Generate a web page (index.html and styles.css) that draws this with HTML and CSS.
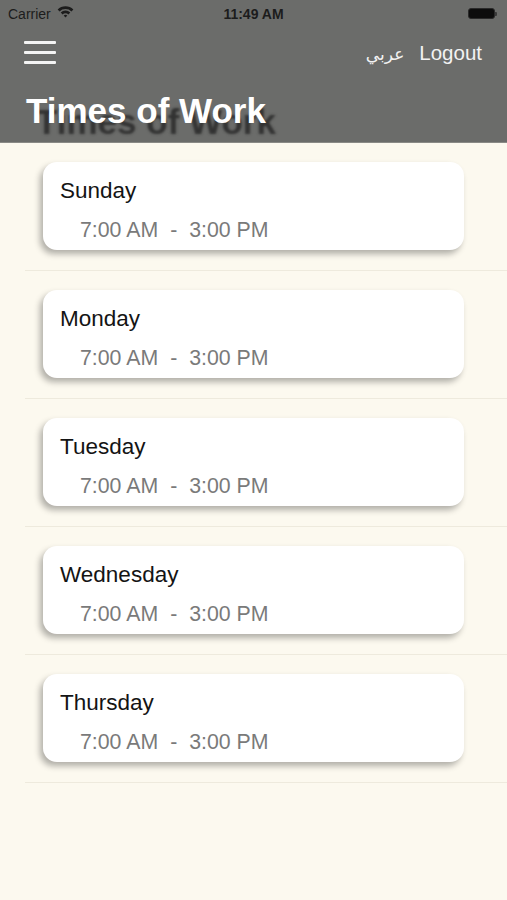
FILE: index.html
```html
<!DOCTYPE html>
<html lang="en">
<head>
<meta charset="utf-8">
<title>Times of Work</title>
<link rel="stylesheet" href="styles.css">
</head>
<body>
<header class="header">
  <div class="status">
    <div class="status-left">
      <span>Carrier</span>
      <svg class="wifi" width="17" height="13" viewBox="0 0 16 12" aria-hidden="true">
        <path d="M0.6 4.2 A10.5 10.5 0 0 1 15.4 4.2 L13.6 6 A7.9 7.9 0 0 0 2.4 6 Z" fill="#1c1c1c"/>
        <path d="M3.5 7 A6.3 6.3 0 0 1 12.5 7 L10.7 8.8 A3.8 3.8 0 0 0 5.3 8.8 Z" fill="#1c1c1c"/>
        <path d="M6.3 9.8 A2.4 2.4 0 0 1 9.7 9.8 L8 11.6 Z" fill="#1c1c1c"/>
      </svg>
    </div>
    <div class="status-time">11:49 AM</div>
    <div class="status-right">
      <span class="battery"><span class="battery-fill"></span></span><span class="battery-nub"></span>
    </div>
  </div>
  <nav class="nav">
    <button class="menu" aria-label="Menu"><span></span><span></span><span></span></button>
    <div class="nav-actions">
      <span class="lang" lang="ar">عربي</span>
      <span class="logout">Logout</span>
    </div>
  </nav>
  <h1 class="title">Times of Work</h1>
</header>
<main class="list">
  <div class="row"><div class="card"><div class="day">Sunday</div><div class="hours"><span>7:00 AM</span><span class="dash">-</span><span>3:00 PM</span></div></div></div>
  <div class="row"><div class="card"><div class="day">Monday</div><div class="hours"><span>7:00 AM</span><span class="dash">-</span><span>3:00 PM</span></div></div></div>
  <div class="row"><div class="card"><div class="day">Tuesday</div><div class="hours"><span>7:00 AM</span><span class="dash">-</span><span>3:00 PM</span></div></div></div>
  <div class="row"><div class="card"><div class="day">Wednesday</div><div class="hours"><span>7:00 AM</span><span class="dash">-</span><span>3:00 PM</span></div></div></div>
  <div class="row"><div class="card"><div class="day">Thursday</div><div class="hours"><span>7:00 AM</span><span class="dash">-</span><span>3:00 PM</span></div></div></div>
</main>
</body>
</html>
```
FILE: styles.css
```css
html, body {
  margin: 0;
  padding: 0;
}
body {
  background: #fcf9ef;
  font-family: "Liberation Sans", Arial, "DejaVu Sans", sans-serif;
  min-height: 900px;
}
.header {
  background: #6b6c6a;
  height: 143px;
  box-sizing: border-box;
  border-bottom: 1px solid #8a8a86;
}
.status {
  height: 27px;
  display: grid;
  grid-template-columns: 1fr auto 1fr;
  align-items: center;
  padding: 0 8px;
  color: #1c1c1c;
  font-size: 14px;
}
.status-left {
  display: flex;
  align-items: center;
  gap: 6px;
}
.wifi {
  margin-top: -4px;
}
.status-time {
  font-weight: bold;
  font-size: 14px;
}
.status-right {
  display: flex;
  justify-content: flex-end;
  align-items: center;
  padding-right: 2px;
}
.battery {
  width: 25px;
  height: 9px;
  border-radius: 3px;
  background: #0c0c0c;
  border: 1px solid #2a2a2a;
  display: block;
}
.battery-nub {
  width: 2px;
  height: 4px;
  background: #3a3a3a;
  border-radius: 0 1px 1px 0;
  display: block;
}
.nav {
  height: 52px;
  display: flex;
  align-items: center;
  justify-content: space-between;
  padding: 0 25px 0 24px;
}
.menu {
  background: none;
  border: 0;
  padding: 0;
  width: 32px;
  display: flex;
  flex-direction: column;
  gap: 7px;
  margin-top: -2px;
}
.menu span {
  display: block;
  height: 3px;
  background: #f4f4f4;
  border-radius: 1px;
}
.nav-actions {
  display: flex;
  align-items: center;
  gap: 15px;
  color: #f2f2f2;
  font-size: 20.5px;
}
.lang {
  font-family: "DejaVu Sans", sans-serif;
  font-size: 17px;
  margin-top: 2px;
}
.title {
  margin: 0;
  padding: 12px 0 0 26px;
  font-size: 35px;
  line-height: 40px;
  font-weight: bold;
  color: #ffffff;
  text-shadow: 10px 11px 2.5px rgba(40, 40, 40, 0.85);
  letter-spacing: 0;
}
.list {
  display: flex;
  flex-direction: column;
}
.row {
  margin-left: 25px;
  padding: 19px 0 20px 18px;
  border-bottom: 1px solid #eeeadd;
}
.card {
  width: 421px;
  height: 88px;
  box-sizing: border-box;
  background: #ffffff;
  border-radius: 14px;
  box-shadow: -3px 4px 6px rgba(0, 0, 0, 0.3);
  padding: 16px 17px 0;
}
.day {
  font-size: 22.5px;
  line-height: 26px;
  color: #141414;
}
.hours {
  margin-top: 14px;
  padding-left: 20px;
  display: flex;
  gap: 12px;
  font-size: 21.3px;
  line-height: 24px;
  color: #7a7a7a;
}
```
